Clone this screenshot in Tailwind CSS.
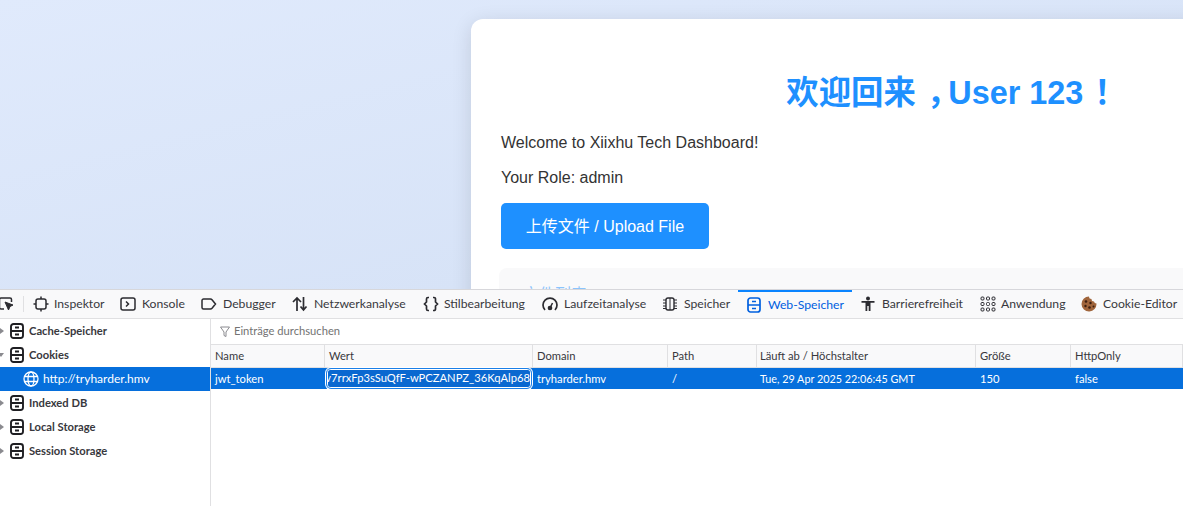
<!DOCTYPE html>
<html lang="en">
<head>
    <meta charset="UTF-8">
    <meta name="viewport" content="width=device-width, initial-scale=1.0">
    <script src="https://cdn.jsdelivr.net/npm/@tailwindcss/browser@4"></script>
    <title>Dashboard</title>
</head>
<body class="h-[506px] overflow-hidden bg-white flex flex-col">
    <!-- page being inspected -->
    <div class="h-[289px] shrink-0 overflow-hidden bg-gradient-to-br from-[#e0eafc] to-[#d3e0f5] pl-[471px] pt-[19px] font-['Liberation_Sans','Noto_Sans_CJK_SC',sans-serif]">
        <div class="w-[954px] h-[400px] bg-white rounded-xl shadow-[0_4px_20px_rgba(0,0,0,0.12)] p-[30px] text-[#333]">
            <h1 class="mt-[26px] pl-[6px] text-center text-[32.4px] leading-[37px] font-bold text-[#1e90ff]">欢迎回来<span class="relative left-[11px]">，</span>User 123<span class="relative left-[11px]">！</span></h1>
            <p class="mt-[22px] text-base leading-[18px]">Welcome to Xiixhu Tech Dashboard!</p>
            <p class="mt-[17px] text-base leading-[18px]">Your Role: admin</p>
            <button class="mt-[16px] w-[208px] h-[46px] pt-px bg-[#1e90ff] rounded-[5px] text-white text-base">上传文件 / Upload File</button>
            <div class="mt-[19px] -ml-[2px] bg-[#f9f9fa] rounded-lg h-[100px] pl-[24px] pt-[15px] text-base text-[#1e90ff]/50">文件列表</div>
        </div>
    </div>

    <!-- devtools -->
    <div class="flex-1 flex flex-col border-t border-[#d7d7db] bg-white text-[11.2px] text-[#38383d] font-['Lato',sans-serif]">
        <div class="h-[29px] shrink-0 flex bg-[#f9f9fa] border-b border-[#e0e0e2] text-[12.2px] whitespace-nowrap overflow-hidden">
            <div class="w-[25px] shrink-0 flex items-center">
                <div class="w-[24px] h-[16px] border-r border-[#e0e0e2] overflow-hidden">
                    <svg class="-ml-[2px]" width="16" height="16" viewBox="0 0 16 16" fill="none" stroke="#2b2b30" stroke-width="1.5"><path d="M6 13H3a1.5 1.5 0 0 1-1.5-1.5v-8A1.5 1.5 0 0 1 3 2h9a1.5 1.5 0 0 1 1.5 1.5V6"/><path d="M7 6l8 3-3 1.5L10.5 14z" fill="#2b2b30" stroke-width="1"/></svg>
                </div>
            </div>
            <div class="w-[87px] shrink-0 flex items-center gap-[5px] pl-2">
                <svg class="shrink-0" width="16" height="16" viewBox="0 0 16 16" fill="none" stroke="#2b2b30" stroke-width="1.5"><rect x="3" y="3" width="10" height="10" rx="2"/><path d="M8 0.5V3M8 13v2.5M0.5 8H3M13 8h2.5"/></svg>
                <span>Inspektor</span>
            </div>
            <div class="w-[81px] shrink-0 flex items-center gap-[6px] pl-2">
                <svg class="shrink-0" width="16" height="16" viewBox="0 0 16 16" fill="none" stroke="#2b2b30" stroke-width="1.5"><rect x="1" y="2" width="14" height="12" rx="2"/><path d="M6 5.5L8.5 8 6 10.5"/></svg>
                <span>Konsole</span>
            </div>
            <div class="w-[91px] shrink-0 flex items-center gap-[6px] pl-2">
                <svg class="shrink-0" width="16" height="16" viewBox="0 0 16 16" fill="none" stroke="#2b2b30" stroke-width="1.5"><path d="M2.5 3h7a2 2 0 0 1 1.5.7L14.5 8 11 12.300a2 2 0 0 1-1.500.7h-7a1.500 1.500 0 0 1-1.500-1.500v-7A1.500 1.500 0 0 1 2.500 3z"/></svg>
                <span>Debugger</span>
            </div>
            <div class="w-[131px] shrink-0 flex items-center gap-[6px] pl-2">
                <svg class="shrink-0" width="16" height="16" viewBox="0 0 16 16" fill="none" stroke="#2b2b30" stroke-width="1.700"><path d="M5 15V2M1 6l4-4 4 4"/><path d="M11.500 1v13M8.500 10.500l3 3.500 3-3.500"/></svg>
                <span>Netzwerkanalyse</span>
            </div>
            <div class="w-[119px] shrink-0 flex items-center gap-[5px] pl-2">
                <svg class="shrink-0" width="16" height="16" viewBox="0 0 16 16" fill="none" stroke="#2b2b30" stroke-width="1.700"><path d="M6 1.500H5a1.500 1.500 0 0 0-1.500 1.500v3L1.500 8l2 2v3A1.500 1.500 0 0 0 5 14.500h1"/><path d="M10 1.500h1A1.500 1.500 0 0 1 12.500 3v3l2 2-2 2v3a1.500 1.500 0 0 1-1.500 1.500h-1"/></svg>
                <span>Stilbearbeitung</span>
            </div>
            <div class="w-[120px] shrink-0 flex items-center gap-[6px] pl-2">
                <svg class="shrink-0" width="16" height="16" viewBox="0 0 16 16" fill="none" stroke="#2b2b30" stroke-width="1.700"><path d="M3 14A7 7 0 1 1 13 14"/><path d="M8 12l2.500-5" stroke-width="1.500"/><circle cx="8" cy="12" r="1.500" fill="#2b2b30"/></svg>
                <span>Laufzeitanalyse</span>
            </div>
            <div class="w-[84px] shrink-0 flex items-center gap-[6px] pl-2">
                <svg class="shrink-0" width="16" height="16" viewBox="0 0 16 16" fill="none" stroke="#2b2b30" stroke-width="1.400"><rect x="4" y="2" width="8" height="12" rx="2"/><path d="M8 2v12" stroke-width="1"/><path d="M1 4h3M1 7h3M1 10h3M1 12.500h3M12 4h3M12 7h3M12 10h3M12 12.500h3" stroke-width="1"/></svg>
                <span>Speicher</span>
            </div>
            <div class="w-[114px] shrink-0 flex items-center gap-[7px] pl-[9px] border-t-[2px] border-[#0a84ff] text-[#0060df]">
                <svg class="shrink-0" width="14" height="16" viewBox="0 0 14 16" fill="none" stroke="#0060df" stroke-width="1.700"><rect x="1" y="1" width="12" height="14" rx="2.500"/><path d="M1 8h12M5 4.500h4M5 11.500h4"/></svg>
                <span>Web-Speicher</span>
            </div>
            <div class="w-[120px] shrink-0 flex items-center gap-[6px] pl-2">
                <svg class="shrink-0" width="16" height="16" viewBox="0 0 16 16" fill="#2b2b30"><circle cx="8" cy="2.500" r="2"/><path d="M1.500 5h13v1.800H10.500V15H8.700v-5H7.300v5H5.500V6.800H1.500z"/></svg>
                <span>Barrierefreiheit</span>
            </div>
            <div class="w-[101px] shrink-0 flex items-center gap-[5px] pl-2">
                <svg class="shrink-0" width="16" height="16" viewBox="0 0 16 16" fill="none" stroke="#2b2b30" stroke-width="1"><rect x="1" y="1" width="3" height="3" rx="1"/><rect x="6.500" y="1" width="3" height="3" rx="1"/><rect x="12" y="1" width="3" height="3" rx="1"/><rect x="1" y="6.500" width="3" height="3" rx="1"/><rect x="6.500" y="6.500" width="3" height="3" rx="1"/><rect x="12" y="6.500" width="3" height="3" rx="1"/><rect x="1" y="12" width="3" height="3" rx="1"/><rect x="6.500" y="12" width="3" height="3" rx="1"/><rect x="12" y="12" width="3" height="3" rx="1"/></svg>
                <span>Anwendung</span>
            </div>
            <div class="flex items-center gap-[6px] pl-2">
                <svg class="shrink-0" width="16" height="16" viewBox="0 0 16 16"><path d="M8 .5a2.500 2.500 0 0 0 2.500 2.500A2.500 2.500 0 0 0 13 5.500a2.500 2.500 0 0 0 2.500 2A7.500 7.500 0 1 1 8 .5z" fill="#a0653c"/><circle cx="5" cy="5.500" r="1.300" fill="#3c1f10"/><circle cx="9.500" cy="7" r="1.200" fill="#3c1f10"/><circle cx="4.500" cy="10" r="1.200" fill="#3c1f10"/><circle cx="8.500" cy="11.500" r="1.300" fill="#3c1f10"/><circle cx="12.500" cy="10.500" r="1" fill="#3c1f10"/></svg>
                <span>Cookie-Editor</span>
            </div>
        </div>

        <div class="flex-1 flex min-h-0">
            <!-- storage tree -->
            <div class="w-[211px] shrink-0 border-r border-[#e0e0e2] font-bold text-[#38383d]">
                <div class="h-[24px] flex items-center">
                    <svg class="shrink-0 mr-[6px]" width="4" height="8" viewBox="0 0 4 8" fill="#8a8a8f"><path d="M0 1l4 3-4 3z"/></svg>
                    <svg class="shrink-0 mr-[5px]" width="14" height="16" viewBox="0 0 14 16" fill="none" stroke="#1f1f23" stroke-width="1.900"><rect x="1" y="1" width="12" height="14" rx="2.500"/><path d="M1 8h12M5 4.500h4M5 11.500h4"/></svg>
                    <span>Cache-Speicher</span>
                </div>
                <div class="h-[24px] flex items-center">
                    <svg class="shrink-0 mr-[6px]" width="4" height="8" viewBox="0 0 4 8" fill="#8a8a8f"><path d="M-2 2h6L1 6z"/></svg>
                    <svg class="shrink-0 mr-[5px]" width="14" height="16" viewBox="0 0 14 16" fill="none" stroke="#1f1f23" stroke-width="1.900"><rect x="1" y="1" width="12" height="14" rx="2.500"/><path d="M1 8h12M5 4.500h4M5 11.500h4"/></svg>
                    <span>Cookies</span>
                </div>
                <div class="h-[24px] flex items-center pl-[23px] gap-[4px] bg-[#066fdc] text-white font-normal text-[12px]">
                    <svg class="shrink-0" width="16" height="16" viewBox="0 0 16 16" fill="none" stroke="#fff" stroke-width="1.300"><circle cx="8" cy="8" r="7"/><ellipse cx="8" cy="8" rx="3" ry="7"/><path d="M1.500 5.500h13M1.500 10.500h13"/></svg>
                    <span>http://tryharder.hmv</span>
                </div>
                <div class="h-[24px] flex items-center">
                    <svg class="shrink-0 mr-[6px]" width="4" height="8" viewBox="0 0 4 8" fill="#8a8a8f"><path d="M0 1l4 3-4 3z"/></svg>
                    <svg class="shrink-0 mr-[5px]" width="14" height="16" viewBox="0 0 14 16" fill="none" stroke="#1f1f23" stroke-width="1.900"><rect x="1" y="1" width="12" height="14" rx="2.500"/><path d="M1 8h12M5 4.500h4M5 11.500h4"/></svg>
                    <span>Indexed DB</span>
                </div>
                <div class="h-[24px] flex items-center">
                    <svg class="shrink-0 mr-[6px]" width="4" height="8" viewBox="0 0 4 8" fill="#8a8a8f"><path d="M0 1l4 3-4 3z"/></svg>
                    <svg class="shrink-0 mr-[5px]" width="14" height="16" viewBox="0 0 14 16" fill="none" stroke="#1f1f23" stroke-width="1.900"><rect x="1" y="1" width="12" height="14" rx="2.500"/><path d="M1 8h12M5 4.500h4M5 11.500h4"/></svg>
                    <span>Local Storage</span>
                </div>
                <div class="h-[24px] flex items-center">
                    <svg class="shrink-0 mr-[6px]" width="4" height="8" viewBox="0 0 4 8" fill="#8a8a8f"><path d="M0 1l4 3-4 3z"/></svg>
                    <svg class="shrink-0 mr-[5px]" width="14" height="16" viewBox="0 0 14 16" fill="none" stroke="#1f1f23" stroke-width="1.900"><rect x="1" y="1" width="12" height="14" rx="2.500"/><path d="M1 8h12M5 4.500h4M5 11.500h4"/></svg>
                    <span>Session Storage</span>
                </div>
            </div>

            <!-- cookie table -->
            <div class="flex-1 min-w-0">
                <div class="h-[26px] flex items-center pl-[9px] gap-[4px] border-b border-[#e0e0e2] text-[#737373]">
                    <svg width="10" height="12" viewBox="0 0 10 12" fill="none" stroke="#8a8a8f"><path d="M.5 1h9L6 6v4.500L4 9.500V6z"/></svg>
                    <span>Einträge durchsuchen</span>
                </div>
                <div class="h-[23px] grid grid-cols-[114px_208px_135px_89px_219px_95px_1fr] bg-[#f9f9fa] border-b border-[#e0e0e2]">
                    <div class="pl-[4px] flex items-center border-r border-[#e0e0e2]">Name</div>
                    <div class="pl-[4px] flex items-center border-r border-[#e0e0e2]">Wert</div>
                    <div class="pl-[4px] flex items-center border-r border-[#e0e0e2]">Domain</div>
                    <div class="pl-[4px] flex items-center border-r border-[#e0e0e2]">Path</div>
                    <div class="pl-[3px] flex items-center border-r border-[#e0e0e2]">Läuft ab / Höchstalter</div>
                    <div class="pl-[4px] flex items-center border-r border-[#e0e0e2]">Größe</div>
                    <div class="pl-[4px] flex items-center border-r border-[#e0e0e2]">HttpOnly</div>
                </div>
                <div class="h-[21px] grid grid-cols-[114px_208px_135px_89px_219px_95px_1fr] bg-[#066fdc] text-white">
                    <div class="pl-[4px] pt-px flex items-center">jwt_token</div>
                    <div class="mx-[2px] my-[1px] flex justify-end items-center overflow-hidden whitespace-nowrap border border-white rounded-[4px] shadow-[0_0_0_1px_#1a7fe8,0_0_0_2px_#fff]">
                        <span class="bg-[#0a68d0]">VzNTkrv7rrxFp3sSuQfF-wPCZANPZ_36KqAlp68</span>
                    </div>
                    <div class="pl-[4px] pt-px flex items-center">tryharder.hmv</div>
                    <div class="pl-[4px] pt-px flex items-center">/</div>
                    <div class="pl-[3px] pt-px flex items-center text-[10.8px]">Tue, 29 Apr 2025 22:06:45 GMT</div>
                    <div class="pl-[4px] pt-px flex items-center">150</div>
                    <div class="pl-[4px] pt-px flex items-center">false</div>
                </div>
            </div>
        </div>
    </div>
</body>
</html>
